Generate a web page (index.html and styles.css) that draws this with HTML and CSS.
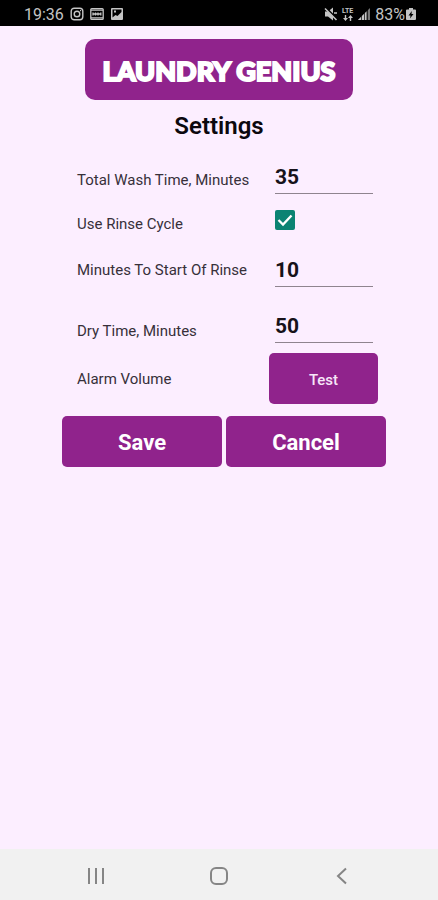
FILE: index.html
```html
<!DOCTYPE html>
<html lang="en">
<head>
<meta charset="utf-8">
<meta name="viewport" content="width=device-width, initial-scale=1">
<title>Laundry Genius - Settings</title>
<link rel="stylesheet" href="styles.css">
</head>
<body>
<header class="status">
  <div class="status-group">
    <span>19:36</span>
    <svg class="icon" viewBox="0 0 14 14" fill="none" stroke="currentColor" stroke-width="1.4"><rect x="1.2" y="1.2" width="11.6" height="11.6" rx="3"/><circle cx="7" cy="7" r="2.8"/><path d="M10 3.6h1"/></svg>
    <svg class="icon" viewBox="0 0 14 14" fill="none" stroke="currentColor" stroke-width="1.3"><rect x=".8" y="1.6" width="12.4" height="10.800" rx="1"/><path d="M1 3.200h12M1 10.800h12"/><path d="M3 5.500v3M5.500 5.500v3M8 5.500v3M10.800 5.500v3M3 7h8"/></svg>
    <svg class="icon" viewBox="0 0 14 14"><path fill="currentColor" fill-rule="evenodd" d="M2 1h10a1 1 0 0 1 1 1v10a1 1 0 0 1-1 1H2a1 1 0 0 1-1-1V2a1 1 0 0 1 1-1zM2.500 10.500l3-2.500 2 1 4-4V2.500h-9zM4 3.500h2v2H4z"/></svg>
  </div>
  <div class="status-group status-right">
    <svg class="icon" viewBox="0 0 14 14"><path fill="currentColor" d="M1 4.500h3l5-4v13l-5-4H1z"/><path d="M1 0l12.500 12.500" stroke="#000" stroke-width="2"/><path d="M1 1.500l11.500 11.500M10 6h3" stroke="currentColor" stroke-width="1.600"/></svg>
    <span class="lte"><span>LTE</span><svg viewBox="0 0 10 6" width="10" height="6" fill="currentColor"><path d="M0 3l2.500 3L5 3H3.200V0H1.800v3zM5 3l2.500-3L10 3H8.200v3H6.800V3z"/></svg></span>
    <svg class="icon" viewBox="0 0 14 14"><path fill="#777" d="M13 1v12H1z"/><path fill="currentColor" d="M9 5v8H1z"/><path d="M4.500 6v7M7.500 4v9M10.500 1v12" stroke="#000" stroke-width=".7"/></svg>
    <span>83%</span>
    <svg class="battery" viewBox="0 0 10 14"><path fill="currentColor" fill-rule="evenodd" d="M3 1h4v1.500h2a1 1 0 0 1 1 1V12a1 1 0 0 1-1 1H1a1 1 0 0 1-1-1V3.500a1 1 0 0 1 1-1h2zM5.800 4L2.500 8.500h2L4 11.500 7.500 7h-2z"/></svg>
  </div>
</header>
<main class="page">
  <div class="brand">LAUNDRY GENIUS</div>
  <h1 class="title">Settings</h1>
  <form class="form">
    <div class="row row-wash">
      <label for="wash">Total Wash Time, Minutes</label>
      <input class="number" id="wash" type="text" inputmode="numeric" value="35">
    </div>
    <div class="row row-rinse">
      <label for="rinse">Use Rinse Cycle</label>
      <input class="check" id="rinse" type="checkbox" checked>
    </div>
    <div class="row row-start">
      <label for="start">Minutes To Start Of Rinse</label>
      <input class="number" id="start" type="text" inputmode="numeric" value="10">
    </div>
    <div class="row row-dry">
      <label for="dry">Dry Time, Minutes</label>
      <input class="number" id="dry" type="text" inputmode="numeric" value="50">
    </div>
    <div class="row row-alarm">
      <label for="test">Alarm Volume</label>
      <button class="button test" id="test" type="button">Test</button>
    </div>
    <div class="actions">
      <button class="button" type="submit">Save</button>
      <button class="button" type="button">Cancel</button>
    </div>
  </form>
</main>
<nav class="navbar" aria-label="System">
  <button type="button" aria-label="Recent apps"><svg viewBox="0 0 20 20"><path d="M3 2v16M10 2v16M17 2v16"/></svg></button>
  <button type="button" aria-label="Home"><svg viewBox="0 0 20 20"><rect x="2" y="2" width="16" height="16" rx="5"/></svg></button>
  <button type="button" aria-label="Back"><svg viewBox="0 0 20 20"><path d="M14 2.500L6 10l8 7.500"/></svg></button>
</nav>
</body>
</html>
```
FILE: styles.css
```css
* { box-sizing: border-box; }

body {
  margin: 0;
  min-height: 100vh;
  display: flex;
  flex-direction: column;
  background: #fceeff;
  color: #17121a;
  font-family: Roboto, "Liberation Sans", sans-serif;
}

.status {
  display: flex;
  justify-content: space-between;
  align-items: center;
  height: 26px;
  padding: 2px 22px 0 24px;
  background: #000;
  color: #c4c4c4;
  font-size: 16px;
}

.status-group {
  display: flex;
  align-items: center;
  gap: 6px;
}

.status-right { gap: 4px; }
.icon { width: 14px; height: 14px; }
.battery { width: 10px; height: 14px; margin-left: -3px; }

.lte {
  display: flex;
  flex-direction: column;
  align-items: center;
  font-size: 7px;
  font-weight: 700;
  line-height: 7px;
}

.page {
  flex: 1;
  display: flex;
  flex-direction: column;
  align-items: center;
  padding: 13px 16px;
}

.brand {
  padding: 2px 18px 0;
  border-radius: 10px;
  background: #90238c;
  color: #fff;
  font-family: Lato, "Liberation Sans", sans-serif;
  font-size: 27px;
  font-weight: 900;
  line-height: 59px;
  white-space: nowrap;
  -webkit-text-stroke: 2px #fff;
}

.title {
  margin: 12px 0 20px;
  color: #0c080e;
  font-size: 24px;
  font-weight: 600;
  line-height: 28px;
}

.form {
  width: 100%;
  max-width: 324px;
  margin-left: 10px;
}

.row {
  display: grid;
  grid-template-columns: 198px 98px;
  padding-left: 15px;
}

.row label {
  align-self: center;
  font-size: 15px;
  font-weight: 400;
  line-height: 20px;
  color: #37303a;
}

.row-wash { height: 40px; margin-bottom: 10px; }
.row-rinse { height: 28px; margin-bottom: 15px; }
.row-start { height: 34px; margin-bottom: 22px; }
.row-dry { height: 44px; }
.row-alarm { grid-template-columns: 192px 109px; }

.number {
  width: 100%;
  height: 34px;
  padding: 0;
  border: 0;
  border-bottom: 1px solid #8f848f;
  background: transparent;
  color: #17121a;
  font: 700 21px/33px Roboto, sans-serif;
}

.check {
  appearance: none;
  width: 20px;
  height: 20px;
  margin: 0;
  border-radius: 2px;
  background: #0b8373 url("data:image/svg+xml,%3Csvg xmlns='http://www.w3.org/2000/svg' viewBox='0 0 20 20'%3E%3Cpath d='M3.500 10l4.500 4.500L16.500 5.500' fill='none' stroke='white' stroke-width='2.300'/%3E%3C/svg%3E");
}

.button {
  height: 51px;
  padding: 2px 0 0;
  border: 0;
  border-radius: 5px;
  background: #90238c;
  color: #fff;
  font: 700 22px Roboto, sans-serif;
}

.test {
  color: #f7e6f8;
  font-size: 15px;
  font-weight: 500;
}

.actions {
  display: grid;
  grid-template-columns: 1fr 1fr;
  gap: 4px;
  margin-top: 12px;
}

.navbar {
  display: flex;
  justify-content: center;
  gap: 103px;
  height: 51px;
  background: #f1f1f1;
}

.navbar button {
  display: flex;
  align-items: center;
  padding: 2px 0 0;
  border: 0;
  background: none;
}

.navbar svg {
  width: 20px;
  height: 20px;
  fill: none;
  stroke: #858585;
  stroke-width: 2;
}
```
